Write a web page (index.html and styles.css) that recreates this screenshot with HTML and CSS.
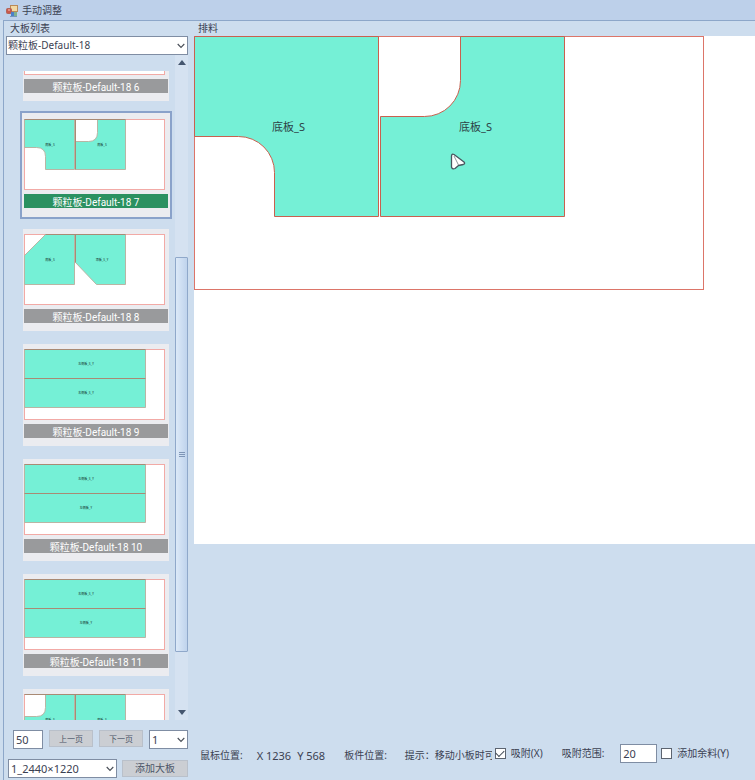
FILE: index.html
```html
<!DOCTYPE html>
<html lang="zh-CN">
<head>
<meta charset="utf-8">
<title>手动调整</title>
<link rel="stylesheet" href="styles.css">
</head>
<body>
<svg class="defs" width="0" height="0" aria-hidden="true">
  <symbol id="chevron" viewBox="0 0 8 6"><path d="M.7 1L4 4.500 7.300 1" fill="none" stroke="#4a4f58" stroke-width="1.1"/></symbol>
  <symbol id="two-rows" viewBox="0 0 142 72">
    <rect class="sheet" x=".5" y=".5" width="140" height="70"/>
    <path class="piece" d="M.5.5h121v29H.5zM.5 29.5h121v29H.5z"/>
    <path class="edge" d="M.5.5h121M.5 29.5h121"/>
  </symbol>
</svg>
<header class="titlebar">
  <svg width="12" height="12" viewBox="0 0 12 12" aria-hidden="true">
    <rect x="4.500" y=".5" width="7" height="6" fill="#f3d9a4" stroke="#b98a58"/>
    <rect x=".5" y="3.500" width="5" height="5" rx="1" fill="#c9584c" stroke="#b0655a"/>
    <path d="M2 5h2" stroke="#f4c5ba"/>
    <rect x="5" y="7" width="3" height="4" fill="#4b7fc8"/>
    <rect x="8" y="7" width="3" height="4" fill="#7fb08f"/>
    <path d="M4 11.500h7" stroke="#7295bd"/>
  </svg>
  <h1>手动调整</h1>
</header>
<div class="window">
  <aside class="sidebar">
    <label class="group-title" for="material">大板列表</label>
    <div class="combo material">
      <select id="material"><option>颗粒板-Default-18</option></select>
      <svg><use href="#chevron"/></svg>
    </div>
    <div class="browser">
      <div class="list">
        <ul>
          <li>
            <svg viewBox="0 0 142 72"><rect class="sheet" x=".5" y=".5" width="140" height="70"/></svg>
            <span>颗粒板-Default-18 6</span>
          </li>
          <li class="selected">
            <svg viewBox="0 0 142 72">
              <rect class="sheet" x=".5" y=".5" width="140" height="70"/>
              <path class="piece" d="M.5.5h50v50h-29V37.500q0-9-9-9H.5zM73.500.5h28v50h-50v-28h13q9 0 9-9z"/>
              <path class="edge" d="M.5.5h101M51.500.5v50"/>
              <text x="26" y="27">底板_S</text><text x="78" y="27">底板_S</text>
            </svg>
            <span>颗粒板-Default-18 7</span>
          </li>
          <li>
            <svg viewBox="0 0 142 72">
              <rect class="sheet" x=".5" y=".5" width="140" height="70"/>
              <path class="piece" d="M21.500.5h29v50H.5v-29zM51.500.5h50v50h-29l-21-22z"/>
              <path class="edge" d="M21.500.5h80M51.500.5v28"/>
              <text x="26" y="27">底板_S</text><text x="78" y="27">顶板_S_Y</text>
            </svg>
            <span>颗粒板-Default-18 8</span>
          </li>
          <li>
            <svg viewBox="0 0 142 72"><use href="#two-rows"/><text x="62" y="16">左侧板_S_Y</text><text x="62" y="45">右侧板_S_Y</text></svg>
            <span>颗粒板-Default-18 9</span>
          </li>
          <li>
            <svg viewBox="0 0 142 72"><use href="#two-rows"/><text x="62" y="16">左侧板_S_Y</text><text x="62" y="45">左侧板_Y</text></svg>
            <span>颗粒板-Default-18 10</span>
          </li>
          <li>
            <svg viewBox="0 0 142 72"><use href="#two-rows"/><text x="62" y="16">右侧板_S_Y</text><text x="62" y="45">左侧板_Y</text></svg>
            <span>颗粒板-Default-18 11</span>
          </li>
          <li>
            <svg viewBox="0 0 142 72">
              <rect class="sheet" x=".5" y=".5" width="140" height="70"/>
              <path class="piece" d="M21.500.5h29v50H.5v-28h12q9 0 9-9zM51.500.5h50v50h-50z"/>
              <path class="edge" d="M.5.5h101M51.500.5v50"/>
              <text x="26" y="27">底板_S</text><text x="78" y="27">底板_S</text>
            </svg>
          </li>
        </ul>
      </div>
      <div class="scrollbar">
        <svg class="arrow" viewBox="0 0 8 5"><path d="M0 5l4-5 4 5z" fill="#45566f"/></svg>
        <div class="before"></div>
        <div class="thumb"><i></i><i></i><i></i></div>
        <div class="after"></div>
        <svg class="arrow" viewBox="0 0 8 5"><path d="M0 0h8L4 5z" fill="#45566f"/></svg>
      </div>
    </div>
    <div class="pager">
      <input class="field page-size" type="text" value="50" aria-label="每页数量">
      <button type="button">上一页</button>
      <button type="button">下一页</button>
      <div class="combo page">
        <select aria-label="页码"><option>1</option></select>
        <svg><use href="#chevron"/></svg>
      </div>
    </div>
    <div class="adder">
      <div class="combo size">
        <select aria-label="大板尺寸"><option>1_2440×1220</option></select>
        <svg><use href="#chevron"/></svg>
      </div>
      <button type="button">添加大板</button>
    </div>
  </aside>
  <main>
    <h2 class="group-title">排料</h2>
    <div class="canvas">
      <svg width="511" height="255" viewBox="0 0 511 255">
        <rect class="board" x=".5" y=".5" width="509" height="253"/>
        <path class="part" d="M.5.5h184v180h-104V136.500a36 36 0 0 0-36-36H.5z"/>
        <path class="part" d="M266.500.5h104v180h-184v-100h44a36 36 0 0 0 36-36z"/>
        <text x="78" y="95">底板_S</text>
        <text x="265" y="95">底板_S</text>
        <path class="cursor" d="M257.500 120q.2-2.500 2.500-1.500l10 7.500q1.500 1.800-.7 2.500l-4.800 1-3.500 3q-3 1-3.500-1.500z"/>
        <path class="cursor-fold" d="M260 120l4.500 9"/>
      </svg>
    </div>
    <footer>
      <div class="status">
        <span>鼠标位置:</span>
        <span class="coords"><span>X 1236</span><span>Y 568</span></span>
        <span class="part-pos">板件位置:</span>
        <span class="hint">提示：移动小板时可</span>
      </div>
      <div class="options">
        <label class="check"><input type="checkbox" checked>吸附(X)</label>
        <label class="range">吸附范围:<input class="field" type="text" value="20"></label>
        <label class="check"><input type="checkbox">添加余料(Y)</label>
      </div>
    </footer>
  </main>
</div>
</body>
</html>
```
FILE: styles.css
```css
* { box-sizing: border-box; }

body {
  margin: 0;
  height: 100vh;
  display: flex;
  flex-direction: column;
  overflow: hidden;
  background: #cdddee;
  color: #3b4152;
  font: 10px/15px "Noto Sans", "Noto Sans CJK SC", sans-serif;
}

h1, h2 { margin: 0; font-size: 10px; font-weight: 400; }
ul { margin: 0; padding: 0; list-style: none; }
.defs { position: absolute; }

.titlebar {
  flex: none;
  height: 20px;
  display: flex;
  align-items: center;
  gap: 4px;
  padding: 1px 0 0 6px;
  background: #bdd0ea;
}

.window {
  flex: 1;
  min-height: 0;
  display: flex;
  margin-left: 3px;
  border: solid #8da7c9;
  border-width: 1px 0 0 1px;
}

.group-title { display: block; height: 15px; padding-left: 6px; }

input, select, button { font: inherit; color: inherit; margin: 0; border-radius: 0; }

.field, .combo select {
  width: 100%;
  height: 19px;
  padding: 0 2px;
  border: 1px solid #7f8da3;
  background: #fff;
  font-size: 11px;
}

.combo { display: grid; align-items: center; }
.combo select { grid-area: 1 / 1; appearance: none; }
.combo svg {
  grid-area: 1 / 1;
  justify-self: end;
  width: 8px;
  height: 6px;
  margin-right: 3px;
  pointer-events: none;
}

button {
  padding: 0;
  border: 1px solid #b9c0ca;
  background: #cbced3;
  color: #4b5568;
}

/* Sheet list */
.sidebar {
  flex: 0 0 190px;
  display: flex;
  flex-direction: column;
  padding-right: 6px;
}

.material { margin-left: 2px; }
.material select { font-size: 10px; padding: 0 1px; }

.browser { flex: 1; min-height: 0; display: flex; }
.list { flex: 1; min-width: 0; margin-top: 16px; overflow: hidden; }
.list ul {
  display: flex;
  flex-direction: column;
  gap: 13px;
  margin-top: -72px;
  padding: 0 6px 0 19px;
}
.list li { flex: none; height: 102px; padding: 5px 1px 0; background: #ebecf0; }
.list li > svg { display: block; width: 142px; height: 72px; }
.list li > span {
  display: block;
  height: 14px;
  margin-top: 3px;
  overflow: hidden;
  background: #999a9c;
  color: #fff;
  font: 10px/18px Roboto, "Noto Sans CJK SC", sans-serif;
  text-align: center;
}
.list .selected { box-shadow: 0 0 0 1px #ebecf0, 0 0 0 3px #8aa2ca; }
.list .selected > span { background: #2b9161; }

.sheet { fill: #fff; stroke: #f2aaa6; }
.piece { fill: #75f0d6; stroke: #b9b5a4; }
.edge { fill: none; stroke: #a98a74; }
.list text { font: 3px "Noto Sans CJK SC", sans-serif; fill: #0c2420; text-anchor: middle; }

.scrollbar {
  flex: 0 0 13px;
  display: flex;
  flex-direction: column;
  align-items: center;
  padding: 5px 0;
  background: #d5e2f1;
}
.arrow { flex: none; width: 8px; height: 5px; }
.before { flex: 192; }
.after { flex: 58; }
.thumb {
  flex: 394;
  align-self: stretch;
  display: flex;
  flex-direction: column;
  align-items: center;
  justify-content: center;
  gap: 1px;
  border: 1px solid #8fa8ca;
  border-radius: 1px;
  background: linear-gradient(90deg, #dce9f8, #bfd3ec);
}
.thumb i { width: 6px; height: 1px; background: #7e95b6; }

.pager { display: flex; gap: 6px; align-items: flex-start; margin-top: 10px; padding-left: 9px; }
.page-size { flex: 0 0 30px; }
.pager button { flex: 1; height: 17px; font-size: 8px; line-height: 15px; }
.page { flex: 0 0 39px; }

.adder { display: flex; gap: 5px; align-items: center; margin: 10px 0 2px; padding: 0 0 0 4px; }
.size { flex: 0 0 109px; }
.adder button { flex: 1; height: 17px; line-height: 15px; }

/* Layout area */
main { flex: 1; min-width: 0; display: flex; flex-direction: column; }
main .group-title { padding-left: 4px; }
.canvas { flex: 508 0 0; min-height: 0; overflow: hidden; background: #fff; }
.canvas svg { display: block; }
.board { fill: #fff; stroke: #dc7569; }
.part { fill: #75f0d6; stroke: #c9604f; }
.canvas text { font: 11px "Noto Sans", "Noto Sans CJK SC", sans-serif; fill: #2c4145; }
.cursor { fill: #fff; stroke: #48565f; stroke-width: 1.3; stroke-linejoin: round; }
.cursor-fold { fill: none; stroke: #8d989c; }

footer {
  flex: 219 0 0;
  display: flex;
  align-items: flex-end;
  gap: 3px;
  padding: 0 26px 17px 6px;
  white-space: nowrap;
}
.status { flex: 1; min-width: 0; display: flex; overflow: hidden; }
.coords { display: flex; gap: 6px; margin: 0 19px 0 14px; font-size: 11px; }
.part-pos { margin-right: 18px; }

.options { display: flex; align-items: center; }
.check { display: flex; align-items: center; gap: 5px; }
.check input {
  appearance: none;
  display: grid;
  place-items: center;
  width: 11px;
  height: 11px;
  border: 1px solid #5c6470;
  background: #fff;
}
.check input:checked::before {
  content: "";
  width: 7px;
  height: 4px;
  border: solid #3f4854;
  border-width: 0 0 1px 1px;
  transform: translateY(-1px) rotate(-45deg);
}
.range { display: flex; align-items: center; gap: 16px; margin: 0 4px 0 19px; }
.range .field { width: 37px; }
```
